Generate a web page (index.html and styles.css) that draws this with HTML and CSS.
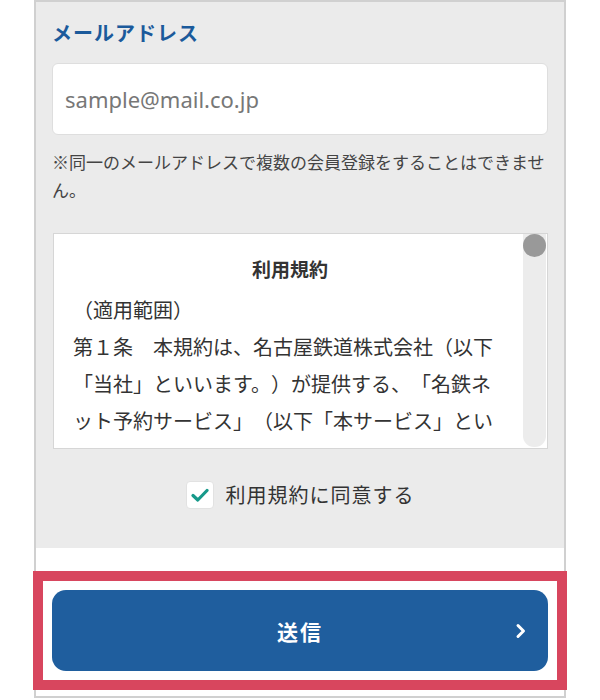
FILE: index.html
```html
<!DOCTYPE html>
<html lang="ja">
<head>
<meta charset="utf-8">
<link rel="stylesheet" href="styles.css">
</head>
<body>
<div class="frame">
  <section class="form-area">
    <h2 class="field-label">メールアドレス</h2>
    <input class="email-input" type="email" placeholder="sample@mail.co.jp">
    <p class="note">※同一のメールアドレスで複数の会員登録をすることはできません。</p>
    <div class="terms">
      <div class="terms-body">
        <h3 class="terms-title">利用規約</h3>
        <p class="terms-text">（適用範囲）<br>第１条　本規約は、名古屋鉄道株式会社（以下<br>「当社」といいます。）が提供する、「名鉄ネ<br>ット予約サービス」（以下「本サービス」とい<br>います。）のサービス内容及び利用条件等につ<br>いて定めるものです。</p>
      </div>
      <div class="scroll-track"><div class="scroll-thumb"></div></div>
    </div>
    <div class="agree">
      <span class="checkbox">
        <svg width="18" height="14" viewBox="0 0 18 14"><path d="M2 7.5 L6.8 12 L16 2.5" fill="none" stroke="#17998a" stroke-width="3.2" stroke-linecap="round" stroke-linejoin="round"/></svg>
      </span>
      <span class="agree-text">利用規約に同意する</span>
    </div>
  </section>
  <section class="submit-area">
    <div class="highlight">
      <button class="submit-btn" type="button">
        <span class="submit-label">送信</span>
        <svg class="chevron" width="12" height="16" viewBox="0 0 12 16"><path d="M3 2.5 L8.5 8 L3 13.5" fill="none" stroke="#ffffff" stroke-width="3" stroke-linecap="round" stroke-linejoin="round"/></svg>
      </button>
    </div>
  </section>
</div>
</body>
</html>
```

FILE: styles.css
```css
* { box-sizing: border-box; }
html, body { margin: 0; padding: 0; background: #ffffff; }
body {
  font-family: "Noto Sans CJK JP", "Noto Sans", sans-serif;
  color: #333333;
  text-spacing-trim: space-all;
}
.frame {
  width: 532px;
  margin-left: 34px;
  border: 2px solid #d0d0d0;
  background: #ffffff;
}
.form-area {
  background: #ebebeb;
  padding: 16px 16px 38px;
}
.field-label {
  margin: 0;
  font-size: 20px;
  line-height: 30px;
  font-weight: 700;
  letter-spacing: 1px;
  color: #1b5a9b;
}
.email-input {
  display: block;
  width: 100%;
  height: 72px;
  margin: 15px 0 0;
  padding: 0 12px;
  border: 1px solid #dedede;
  border-radius: 6px;
  background: #ffffff;
  font-family: "Noto Sans", "Open Sans", sans-serif;
  font-size: 22px;
  color: #333;
  outline: none;
}
.email-input::placeholder { color: #777777; }
.note {
  margin: 13px 0 0;
  font-size: 17px;
  line-height: 28px;
  color: #444444;
}
.terms {
  display: flex;
  height: 216px;
  margin-top: 29px;
  margin-left: 1px;
  border: 1px solid #d6d6d6;
  background: #ffffff;
  overflow: hidden;
}
.terms-body {
  flex: 1;
  padding: 19px 16px 0 19px;
  overflow: hidden;
}
.terms-title {
  margin: 0;
  text-align: center;
  font-size: 19px;
  line-height: 32px;
  font-weight: 700;
  color: #333;
}
.terms-text {
  margin: 6px 0 0;
  font-size: 20px;
  line-height: 37px;
  white-space: nowrap;
  color: #333;
}
.scroll-track {
  width: 23px;
  margin: 0 1px 1px 0;
  background: #ececec;
  border-radius: 0 0 11px 11px;
  display: flex;
  flex-direction: column;
}
.scroll-thumb {
  width: 23px;
  height: 23px;
  border-radius: 50%;
  background: #999999;
}
.agree {
  display: flex;
  align-items: center;
  justify-content: center;
  gap: 12px;
  margin-top: 31px;
}
.checkbox {
  flex: none;
  display: flex;
  align-items: center;
  justify-content: center;
  width: 28px;
  height: 28px;
  background: #ffffff;
  border: 1px solid #e2e2e2;
  border-radius: 4px;
}
.agree-text {
  font-size: 20px;
  line-height: 30px;
  letter-spacing: 1px;
  color: #333;
  white-space: nowrap;
}
.submit-area {
  padding: 33px 7px 16px;
  background: #ffffff;
}
.highlight {
  padding: 9px;
  outline: 10px solid #d8465e;
}
.submit-btn {
  position: relative;
  display: flex;
  align-items: center;
  justify-content: center;
  width: 100%;
  height: 81px;
  border: none;
  border-radius: 14px;
  background: #1f5e9e;
  color: #ffffff;
  font-family: "Noto Sans CJK JP", sans-serif;
  cursor: pointer;
}
.submit-label {
  font-size: 21px;
  font-weight: 700;
  letter-spacing: 2px;
}
.chevron {
  position: absolute;
  right: 21px;
  top: 33px;
}
```
